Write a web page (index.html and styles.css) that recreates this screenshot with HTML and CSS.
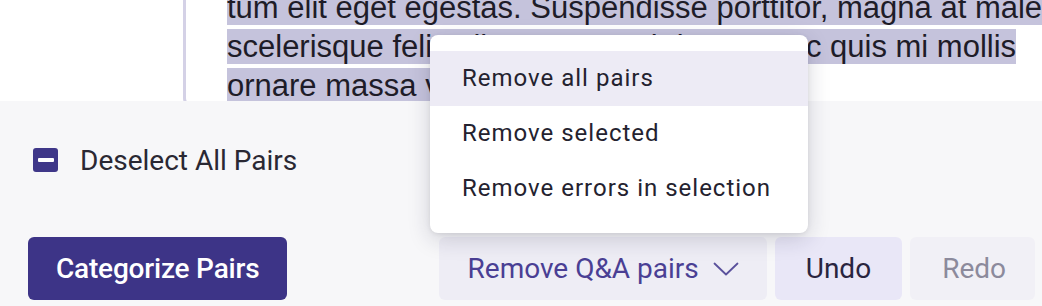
FILE: index.html
```html
<!DOCTYPE html>
<html lang="en">
<head>
  <meta charset="UTF-8">
  <title>Q&amp;A Pairs</title>
  <link rel="stylesheet" href="styles.css">
</head>
<body>

  <!-- passage with selected text -->
  <div class="passage-area">
    <div class="passage">
      <div class="line"><span class="sel">tum elit eget egestas. Suspendisse porttitor, magna at malesuada</span></div>
      <div class="line"><span class="sel">scelerisque felis ullamcorper, ultrices. Nunc quis mi mollis</span></div>
      <div class="line"><span class="sel">ornare massa vitae</span></div>
    </div>
  </div>

  <!-- bottom toolbar -->
  <div class="panel">
    <div class="select-row">
      <span class="checkbox"><span class="dash"></span></span>
      <span class="select-label">Deselect All Pairs</span>
    </div>

    <div class="actions">
      <button class="btn-primary">Categorize Pairs</button>
      <div class="right-actions">
        <button class="btn-dropdown">
          Remove Q&amp;A pairs
          <svg class="chevron" width="26" height="14" viewBox="0 0 26 14">
            <polyline points="1.5,1.5 13,12.5 24.5,1.5" fill="none" stroke="currentColor" stroke-width="1.8" stroke-linecap="round" stroke-linejoin="round"/>
          </svg>
        </button>
        <button class="btn-soft">Undo</button>
        <button class="btn-soft disabled">Redo</button>
      </div>
    </div>
  </div>

  <!-- open dropdown menu -->
  <div class="menu">
    <div class="menu-item active">Remove all pairs</div>
    <div class="menu-item">Remove selected</div>
    <div class="menu-item">Remove errors in selection</div>
  </div>

</body>
</html>
```

FILE: styles.css
```css
html, body {
  margin: 0;
  padding: 0;
  width: 1042px;
  height: 306px;
  overflow: hidden;
  background: white;
  font-family: Roboto, "Noto Sans", sans-serif;
}

.passage-area {
  height: 101px;
  overflow: hidden;
  background: white;
}

.passage {
  margin: -12px 0 0 183px;
  padding: 0 0 0 41px;
  border-left: 3px solid #d4d1e6;
  border-bottom: 3px solid #d4d1e6;
  border-bottom-left-radius: 10px;
  font-family: "Liberation Sans", Arial, sans-serif;
  font-size: 31px;
  line-height: 39px;
  color: #1e1c28;
}

.line {
  white-space: nowrap;
}

.sel {
  background: #c5c3dc;
}

.panel {
  height: 205px;
  background: #f7f7f9;
  padding: 0 7px 0 28px;
  box-sizing: border-box;
}

.select-row {
  display: flex;
  align-items: center;
  height: 40px;
  padding-top: 39px;
  padding-left: 5px;
}

.checkbox {
  width: 25px;
  height: 24px;
  background: #3f3789;
  border-radius: 3px;
  display: flex;
  align-items: center;
  justify-content: center;
}

.dash {
  width: 16px;
  height: 4px;
  background: white;
  border-radius: 1px;
}

.select-label {
  margin-left: 22px;
  font-size: 28px;
  color: #2a2833;
}

.actions {
  display: flex;
  margin-top: 57px;
}

button {
  height: 63px;
  border: none;
  border-radius: 6px;
  font-family: Roboto, "Noto Sans", sans-serif;
  font-size: 28px;
  cursor: pointer;
  padding: 0 31px;
}

.btn-primary {
  background: #3d3487;
  color: white;
  font-weight: 500;
  letter-spacing: -0.2px;
  padding: 0 28px;
}

.right-actions {
  margin-left: auto;
  display: flex;
  gap: 8px;
}

.btn-dropdown {
  display: flex;
  align-items: center;
  background: #eeedf5;
  color: #4a3f94;
  padding: 0 28px 0 29px;
}

.chevron {
  margin-left: 14px;
  color: #5a519c;
}

.btn-soft {
  background: #e9e7f7;
  color: #29253f;
}

.btn-soft.disabled {
  background: #f1f0f6;
  color: #8c8a9c;
  padding: 0 29px 0 32px;
}

.menu {
  position: absolute;
  left: 430px;
  top: 35px;
  width: 378px;
  padding: 16px 0 17px;
  background: white;
  border-radius: 8px;
  box-shadow: 0 6px 22px rgba(30, 25, 60, 0.18), 0 1px 4px rgba(0, 0, 0, 0.08);
  box-sizing: border-box;
}

.menu-item {
  height: 55px;
  line-height: 55px;
  padding-left: 32px;
  font-size: 24px;
  letter-spacing: 1px;
  color: #24222f;
}

.menu-item.active {
  background: #edebf5;
}
```
